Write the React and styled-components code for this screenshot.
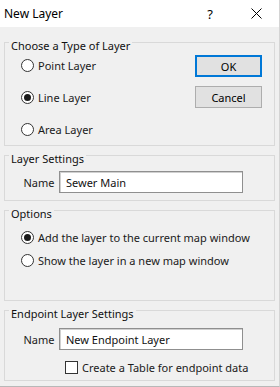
import React from 'react'
import styled, { createGlobalStyle } from 'styled-components'

const GlobalStyle = createGlobalStyle`
  html, body {
    margin: 0;
    padding: 0;
    background: #f0f0f0;
  }
  * { box-sizing: border-box; }
`

const FONT = `"Noto Sans", "Open Sans", Arial, sans-serif`

const Window = styled.div`
  width: 280px;
  height: 387px;
  background: #f0f0f0;
  border-right: 1px solid #d4d4d4;
  border-bottom: 1px solid #b8b8b8;
  font-family: ${FONT};
  font-size: 11px;
  color: #1a1a1a;
  display: flex;
  flex-direction: column;
  overflow: hidden;
`

const TitleBar = styled.div`
  height: 27px;
  background: #fff;
  display: flex;
  align-items: center;
  padding-left: 4px;
  flex-shrink: 0;
`

const Title = styled.span`
  flex: 1;
  font-size: 12px;
  color: #000;
`

const CaptionButton = styled.span`
  width: 46px;
  height: 27px;
  display: flex;
  align-items: center;
  justify-content: center;
  font-size: 13px;
  color: #000;
`

const Content = styled.div`
  display: flex;
  flex-direction: column;
  gap: 9px;
  padding: 15px 4px 0 4px;
`

const Group = styled.div`
  height: ${p => p.$h}px;
  border: 1px solid #d9d9d9;
  display: flex;
  flex-direction: column;
`

const Legend = styled.span`
  align-self: flex-start;
  margin: -5px 0 0 4px;
  padding: 0 2px;
  line-height: 16px;
  background: #f0f0f0;
  font-size: 11px;
  color: #111;
`

const TypeRow = styled.div`
  display: flex;
  justify-content: space-between;
  padding: 0 12px 0 16px;
`

const RadioList = styled.div`
  display: flex;
  flex-direction: column;
  gap: ${p => p.$gap}px;
  margin-top: ${p => p.$top || 0}px;
  padding-left: 16px;
`

const TypeList = styled(RadioList)`
  padding-left: 0;
`

const RadioRow = styled.label`
  display: flex;
  align-items: center;
  height: ${p => p.$h}px;
  gap: 4px;
  font-size: 11px;
`

const Radio = styled.span`
  width: 13px;
  height: 13px;
  border-radius: 50%;
  border: 1px solid #333;
  background: #fff;
  display: flex;
  align-items: center;
  justify-content: center;
  flex-shrink: 0;
  &::after {
    content: '';
    width: 7px;
    height: 7px;
    border-radius: 50%;
    background: #1a1a1a;
    display: ${p => (p.$on ? 'block' : 'none')};
  }
`

const ButtonColumn = styled.div`
  display: flex;
  flex-direction: column;
  gap: 9px;
  margin-top: 1px;
`

const Button = styled.button`
  width: 67px;
  height: 22px;
  padding: 0;
  background: #e1e1e1;
  border: ${p => (p.$primary ? '2px solid #0078d7' : '1px solid #adadad')};
  font-family: ${FONT};
  font-size: 11px;
  color: #000;
`

const FieldRow = styled.div`
  display: flex;
  align-items: center;
  gap: 4px;
  margin-top: ${p => p.$top}px;
  padding-left: 18px;
`

const FieldLabel = styled.span`
  width: 32px;
  font-size: 11px;
  text-align: center;
`

const TextBox = styled.input`
  width: 184px;
  height: 22px;
  padding: 0 6px;
  background: #fff;
  border: 1px solid #8f8f8f;
  box-shadow: inset 1px 1px 0 #d0d0d0;
  font-family: ${FONT};
  font-size: 11px;
  color: #111;
  outline: none;
`

const CheckRow = styled.label`
  display: flex;
  align-items: center;
  gap: 4px;
  height: 18px;
  margin: 8px 0 0 60px;
  font-size: 11px;
`

const CheckBox = styled.span`
  width: 13px;
  height: 13px;
  border: 1px solid #333;
  background: #fff;
  flex-shrink: 0;
`

const CloseIcon = () => (
  <svg width="11" height="11" viewBox="0 0 11 11">
    <path d="M0.5 0.5 L10.5 10.5 M10.5 0.5 L0.5 10.5" stroke="#000" strokeWidth="1" fill="none" />
  </svg>
)

export default function App() {
  return (
    <>
      <GlobalStyle />
      <Window>
        <TitleBar>
          <Title>New Layer</Title>
          <CaptionButton>?</CaptionButton>
          <CaptionButton><CloseIcon /></CaptionButton>
        </TitleBar>
        <Content>
          <Group $h={104}>
            <Legend>Choose a Type of Layer</Legend>
            <TypeRow>
              <TypeList $gap={10}>
                <RadioRow $h={22}><Radio />Point Layer</RadioRow>
                <RadioRow $h={22}><Radio $on />Line Layer</RadioRow>
                <RadioRow $h={22}><Radio />Area Layer</RadioRow>
              </TypeList>
              <ButtonColumn>
                <Button $primary>OK</Button>
                <Button>Cancel</Button>
              </ButtonColumn>
            </TypeRow>
          </Group>
          <Group $h={46}>
            <Legend>Layer Settings</Legend>
            <FieldRow $top={4}>
              <FieldLabel>Name</FieldLabel>
              <TextBox defaultValue="Sewer Main" />
            </FieldRow>
          </Group>
          <Group $h={91}>
            <Legend>Options</Legend>
            <RadioList $gap={3} $top={5}>
              <RadioRow $h={20}><Radio $on />Add the layer to the current map window</RadioRow>
              <RadioRow $h={20}><Radio />Show the layer in a new map window</RadioRow>
            </RadioList>
          </Group>
          <Group $h={71}>
            <Legend>Endpoint Layer Settings</Legend>
            <FieldRow $top={6}>
              <FieldLabel>Name</FieldLabel>
              <TextBox defaultValue="New Endpoint Layer" />
            </FieldRow>
            <CheckRow><CheckBox />Create a Table for endpoint data</CheckRow>
          </Group>
        </Content>
      </Window>
    </>
  )
}
